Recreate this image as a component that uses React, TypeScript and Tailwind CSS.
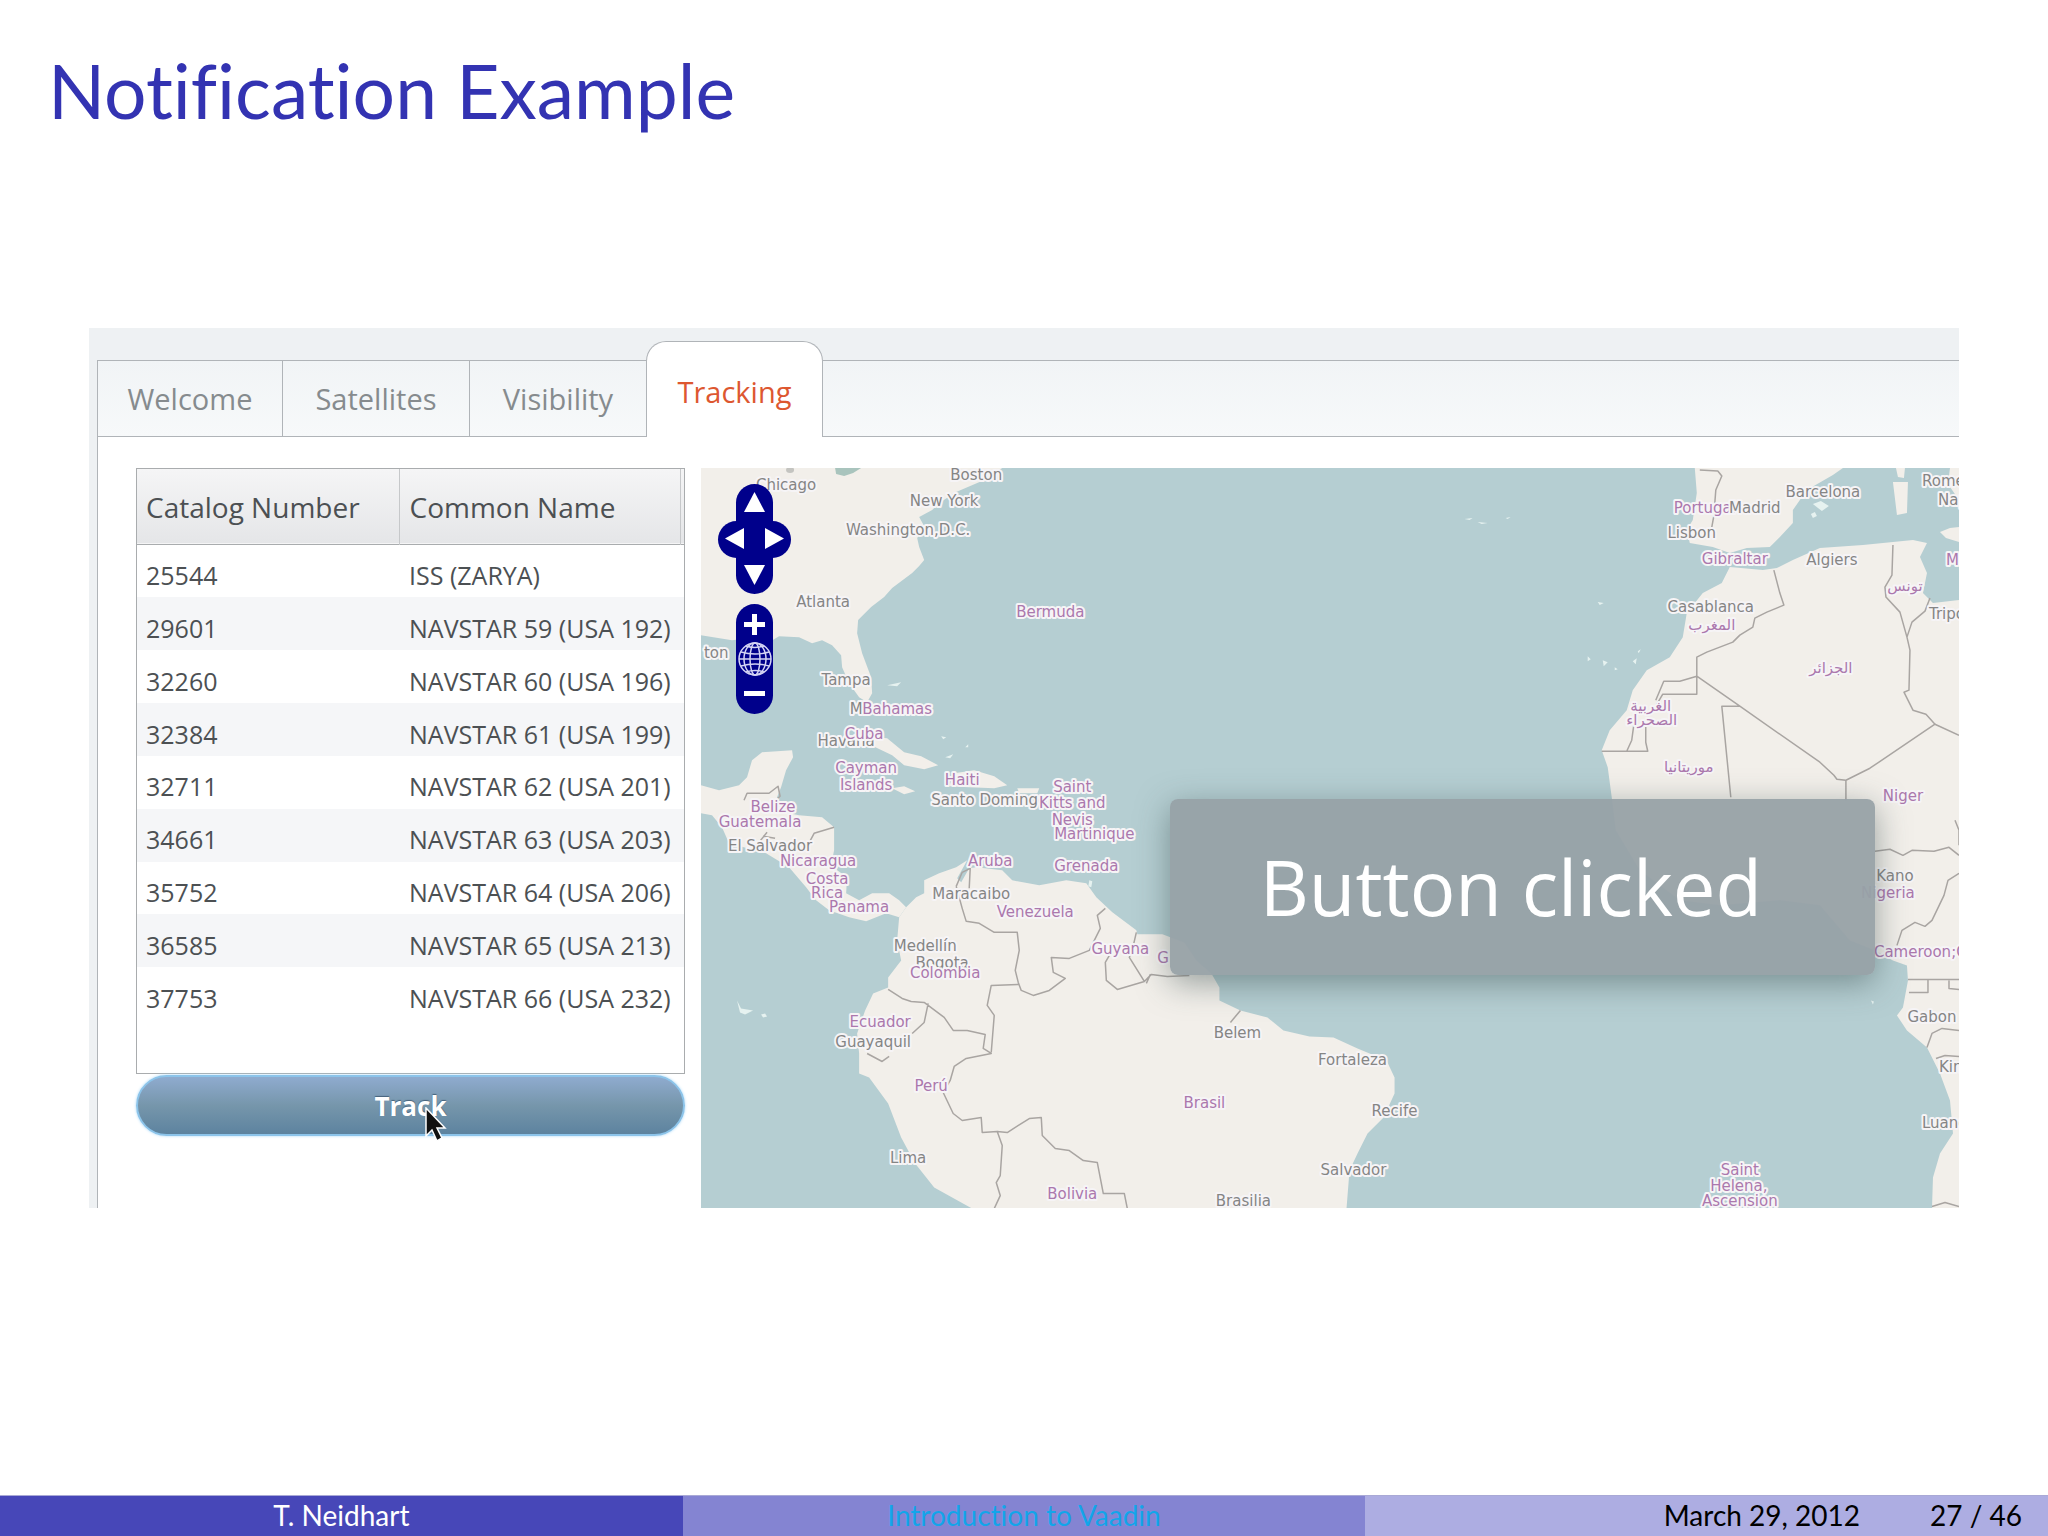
import React from "react";

type Label = { t: string; x: number; y: number; country?: boolean; anchor?: "start" | "middle" };

const satellites: [string, string][] = [
  ["25544", "ISS (ZARYA)"],
  ["29601", "NAVSTAR 59 (USA 192)"],
  ["32260", "NAVSTAR 60 (USA 196)"],
  ["32384", "NAVSTAR 61 (USA 199)"],
  ["32711", "NAVSTAR 62 (USA 201)"],
  ["34661", "NAVSTAR 63 (USA 203)"],
  ["35752", "NAVSTAR 64 (USA 206)"],
  ["36585", "NAVSTAR 65 (USA 213)"],
  ["37753", "NAVSTAR 66 (USA 232)"],
];

const land = [
  // North America
  "M702 468H1003L985 480L957 492L940 503L933 510L920 517L926 528L918 538L920 547L925 560L920 566L913 573L893 588L885 597L872 607L859 620L858 633L863 653L872 677L873 693L868 702L860 697L850 683L843 667L842 655L833 645L823 640L813 643L800 637L780 636L770 642L750 638L733 640L702 635Z",
  // Central America
  "M702 785L720 790L740 785L748 777L753 760L763 752L793 750L794 757L787 770L782 787L778 797L785 812L800 815L823 817L835 827L835 850L833 860L838 870L848 877L847 893L860 900L873 893L890 893L900 900L907 907L900 917L887 913L867 921L850 917L830 910L817 900L807 887L790 867L767 853L730 843L723 827L713 815L702 813Z",
  // South America
  "M907 907L917 897L925 893L925 880L940 873L957 867L968 860L958 878L962 882L970 868L977 867L1003 870L1013 880L1040 885L1067 880L1087 883L1097 897L1113 912L1137 930L1138 934H1163L1185 942L1197 960L1212 973L1220 987L1220 1000L1241 1010L1268 1017L1284 1030L1310 1036L1334 1037L1358 1048L1387 1060L1395 1077L1395 1093L1384 1117L1368 1133L1358 1153L1350 1170L1347 1208H973L935 1187L916 1163L902 1137L889 1103L870 1077L860 1073L860 1053L858 1033L866 1010L874 993L889 987L889 977L902 960L898 940L900 917Z",
  // Iberia and France
  "M1695 468L1697 493L1693 520L1687 530L1690 543L1713 547L1730 553L1747 548L1770 547L1780 537L1793 523L1793 510L1807 490L1833 475L1843 468Z",
  // Africa
  "M1730 567L1763 570L1777 568L1793 560L1820 548L1863 545L1893 542L1913 540L1927 543L1920 557L1927 573L1923 593L1933 603L1959 600V1208H1932L1933 1177L1940 1153L1953 1133L1950 1100L1940 1073L1927 1047L1907 1030L1897 1015L1903 1007L1908 980L1907 965L1893 960L1875 950L1850 940L1820 905L1780 900L1720 905L1680 900L1640 870L1616 830L1612 797L1608 767L1602 750L1610 730L1627 710L1633 690L1647 670L1670 657L1683 637L1687 613L1703 593L1722 583Z",
  // Cuba, Jamaica, Hispaniola, Puerto Rico
  "M842 742L866 736L888 738L905 752L922 756L939 765L925 769L905 765L893 755L870 744Z",
  "M893 788L905 786L916 791L905 794Z",
  "M950 786L955 773L975 770L995 776L1008 785L995 788L970 787Z",
  "M1018 788H1040L1038 793H1020Z",
  // Mediterranean islands and Italy
  "M1896 468H1905L1904 478L1898 477ZM1893 482H1908L1907 513L1897 515Z",
  "M1950 468H1959V500L1948 484ZM1940 532L1950 528L1959 527V542L1946 538Z",
];

const specks = [
  "M1813 504l8-3 8 5-7 5zM1811 514l4-2 2 4-4 2z",
  "M738 1000l4 8 12 2-8 4-5-2zM762 1014l4-1 2 3-4 1z",
  "M888 685l14-3-4 4zM942 736l5 1-3 2zM946 757l8-3-3 4zM966 747l3-3 0 3z",
  "M1465 519l8-1-3 2zM1478 522l10 1-6 1zM1506 518l5-1-3 2z",
  "M1598 602l6 1-4 2zM1588 656l3 3-3 2zM1603 660l5 2-4 4zM1615 667l3 2-3 1zM1633 661l4-3-1 6zM1638 651l3-2-2 4z",
  "M1871 1000l3 1-1 3zM1090 880l3 1-1 6-3-1z",
];

const borders = [
  // north-western Africa
  "M1774 570L1780 593L1784 605L1767 612L1755 618L1753 627L1740 635L1733 642L1707 652L1697 657V694H1663L1656 706M1697 676L1680 681L1664 681L1656 700M1635 718L1632 740L1627 751M1602 751H1648L1646 742L1646 726M1697 676L1740 706L1722 706L1731 797M1740 706L1820 762L1834 775L1837 779L1846 780L1870 768L1935 724L1959 735M1846 780V800",
  "M1893 545L1892 575L1885 587L1886 597L1900 612L1907 637L1910 650L1909 690L1904 692L1913 710L1926 714L1935 724M1907 637L1912 622L1925 611L1930 598",
  // Nigeria, Cameroon, Gabon, Congo
  "M1875 851L1890 849L1903 855L1912 850L1934 851L1949 847L1959 855M1959 873L1948 880L1944 895L1932 920L1925 926L1915 922L1902 930L1897 945M1908 979H1959M1928 979V992H1909M1949 980V988L1959 989M1927 1047L1932 1033L1942 1028L1959 1030M1936 1058L1945 1055L1959 1056M1932 1206L1945 1202L1959 1206M1955 820L1959 830V845",
  // Portugal
  "M1700 470L1718 471L1722 476L1716 490L1714 516L1712 527",
  // Mexico, Guatemala, Honduras, Nicaragua
  "M745 800L748 793H770L779 786L781 796L770 806M760 842L768 832M764 836L776 838M806 850L815 833L835 827",
  // Colombia, Venezuela, Guyana
  "M957 886L963 872L971 868L970 888M957 886L963 908L967 921L980 923L995 932H1018L1020 950L1016 970L1019 982L1022 990L1034 995L1050 990L1066 978L1054 972L1052 957L1070 958L1090 950L1101 928L1098 915L1106 908M1020 984L992 985L990 995L988 1005L995 1015L992 1052M1137 932L1134 945L1130 957L1145 981L1118 989L1107 980L1106 962L1113 950M1145 981L1152 974L1168 976L1190 975M1147 983L1151 974",
  // Ecuador, Peru, Bolivia
  "M889 989L903 998L912 1001L925 1002L945 1017L954 1030L968 1030L986 1034L984 1048L992 1053L967 1058L955 1066L951 1080L944 1092L954 1113L963 1120L982 1117L983 1132L998 1131L1003 1145L1001 1175L997 1182L1001 1195L995 1208M998 1131L1008 1132L1030 1118L1042 1117L1043 1135L1056 1148L1070 1150L1084 1160L1098 1162L1104 1193H1125L1128 1208M929 1003L925 1022L913 1033M868 1053L883 1061L890 1056",
  "M1231 1022L1241 1010",
];

const labels: Label[] = [
  { t: "Chicago", x: 787, y: 485 },
  { t: "Boston", x: 977, y: 475 },
  { t: "New York", x: 945, y: 501 },
  { t: "Washington,D.C.", x: 909, y: 530 },
  { t: "Atlanta", x: 824, y: 602 },
  { t: "ton", x: 705, y: 653, anchor: "start" },
  { t: "Bermuda", x: 1051, y: 612, country: true },
  { t: "Tampa", x: 847, y: 680 },
  { t: "M", x: 857, y: 709 },
  { t: "Bahamas", x: 898, y: 709, country: true },
  { t: "Havana", x: 847, y: 741 },
  { t: "Cuba", x: 865, y: 734, country: true },
  { t: "Cayman", x: 867, y: 768, country: true },
  { t: "Islands", x: 867, y: 785, country: true },
  { t: "Haiti", x: 963, y: 780, country: true },
  { t: "Santo Domingo", x: 990, y: 800 },
  { t: "Saint", x: 1073, y: 787, country: true },
  { t: "Kitts and", x: 1073, y: 803, country: true },
  { t: "Nevis", x: 1073, y: 820, country: true },
  { t: "Martinique", x: 1095, y: 834, country: true },
  { t: "Grenada", x: 1087, y: 866, country: true },
  { t: "Aruba", x: 991, y: 861, country: true },
  { t: "Maracaibo", x: 972, y: 894 },
  { t: "Venezuela", x: 1036, y: 912, country: true },
  { t: "Belize", x: 774, y: 807, country: true },
  { t: "Guatemala", x: 761, y: 822, country: true },
  { t: "El Salvador", x: 771, y: 846 },
  { t: "Nicaragua", x: 819, y: 861, country: true },
  { t: "Costa", x: 828, y: 879, country: true },
  { t: "Rica", x: 828, y: 893, country: true },
  { t: "Panama", x: 860, y: 907, country: true },
  { t: "Medellín", x: 926, y: 946 },
  { t: "Bogota", x: 943, y: 963 },
  { t: "Colombia", x: 946, y: 973, country: true },
  { t: "Guyana", x: 1121, y: 949, country: true },
  { t: "G", x: 1158, y: 958, country: true, anchor: "start" },
  { t: "Ecuador", x: 881, y: 1022, country: true },
  { t: "Guayaquil", x: 874, y: 1042 },
  { t: "Perú", x: 932, y: 1086, country: true },
  { t: "Brasil", x: 1205, y: 1102, country: true },
  { t: "Belem", x: 1238, y: 1033 },
  { t: "Lima", x: 909, y: 1157 },
  { t: "Bolivia", x: 1073, y: 1193, country: true },
  { t: "Brasilia", x: 1244, y: 1200 },
  { t: "Fortaleza", x: 1353, y: 1060 },
  { t: "Recife", x: 1395, y: 1110 },
  { t: "Salvador", x: 1354, y: 1169 },
  { t: "Saint", x: 1740, y: 1169, country: true },
  { t: "Helena,", x: 1739, y: 1185, country: true },
  { t: "Ascension", x: 1740, y: 1200, country: true },
  { t: "Portugal", x: 1705, y: 508, country: true },
  { t: "Madrid", x: 1755, y: 508 },
  { t: "Barcelona", x: 1823, y: 492 },
  { t: "Lisbon", x: 1692, y: 533 },
  { t: "Gibraltar", x: 1735, y: 559, country: true },
  { t: "Algiers", x: 1832, y: 560 },
  { t: "Casablanca", x: 1711, y: 607 },
  { t: "المغرب", x: 1712, y: 625, country: true },
  { t: "الجزائر", x: 1831, y: 668, country: true },
  { t: "تونس", x: 1905, y: 586, country: true },
  { t: "الغربية", x: 1651, y: 706, country: true },
  { t: "الصحراء", x: 1652, y: 720, country: true },
  { t: "موريتانيا", x: 1689, y: 767, country: true },
  { t: "Tripoli", x: 1929, y: 614, anchor: "start" },
  { t: "Rome", x: 1922, y: 481, anchor: "start" },
  { t: "Naples", x: 1938, y: 500, anchor: "start" },
  { t: "Malta", x: 1946, y: 560, country: true, anchor: "start" },
  { t: "Niger", x: 1903, y: 796, country: true },
  { t: "Kano", x: 1895, y: 876 },
  { t: "Nigeria", x: 1888, y: 893, country: true },
  { t: "Cameroon;C", x: 1874, y: 952, country: true, anchor: "start" },
  { t: "Gabon", x: 1932, y: 1017 },
  { t: "Kinshasa", x: 1939, y: 1067, anchor: "start" },
  { t: "Luanda", x: 1922, y: 1122, anchor: "start" },
];

function WorldMap() {
  return (
    <svg
      className="block h-full w-full bg-[#b5ced2]"
      viewBox="702 468 1257 740"
      preserveAspectRatio="xMinYMin slice"
      role="img"
      aria-label="Atlantic map"
    >
      <g fill="#f2efea">
        {land.map((d) => (
          <path key={d} d={d} />
        ))}
      </g>
      <g fill="#e6f2f0">
        {specks.map((d) => (
          <path key={d} d={d} />
        ))}
      </g>
      <path d="M836 468h26l-8 5-9 3-8-2z" fill="#a9c4bd" />
      <ellipse cx="791" cy="470" rx="4" ry="3" fill="#c4c4c0" />
      <g fill="none" stroke="#a9a5a2" strokeWidth="1.5" strokeLinejoin="round">
        {borders.map((d) => (
          <path key={d} d={d} />
        ))}
      </g>
      <g
        className="font-['DejaVu_Sans',sans-serif] text-[15px]"
        stroke="#f6f4f6"
        strokeWidth="4"
        strokeLinejoin="round"
        paintOrder="stroke"
      >
        {labels.map((l) => (
          <text
            key={l.t + l.x + l.y}
            x={l.x}
            y={l.y + 5}
            textAnchor={l.anchor ?? "middle"}
            fill={l.country ? "#ab78ad" : "#858585"}
          >
            {l.t}
          </text>
        ))}
      </g>
    </svg>
  );
}

function Arrow({ d, label, className }: { d: string; label: string; className: string }) {
  return (
    <button type="button" aria-label={label} className={className}>
      <svg width="21" height="21" viewBox="0 0 21 21" fill="#fff" aria-hidden="true">
        <path d={d} />
      </svg>
    </button>
  );
}

function MapControls() {
  return (
    <div className="absolute left-[17px] top-4 flex flex-col items-center gap-[10px]">
      <div className="relative grid h-[110px] w-[73px] grid-cols-[28px_17px_28px] grid-rows-3">
        <span className="absolute inset-y-0 left-[18px] w-[37px] rounded-full bg-[#00008b]" />
        <span className="absolute inset-x-0 top-[37px] h-[37px] rounded-full bg-[#00008b]" />
        <Arrow label="Pan up" d="M10.5 0L21 20H0Z" className="relative col-span-3 flex items-center justify-center" />
        <Arrow label="Pan left" d="M0 10.5L19 0V21Z" className="relative flex items-center justify-end" />
        <span />
        <Arrow label="Pan right" d="M21 10.5L2 0V21Z" className="relative flex items-center justify-start" />
        <Arrow label="Pan down" d="M10.5 20L21 0H0Z" className="relative col-span-3 flex items-center justify-center" />
      </div>
      <div className="flex h-[110px] w-[37px] flex-col items-center justify-between rounded-full bg-[#00008b] py-[10px]">
        <button type="button" aria-label="Zoom in">
          <svg width="21" height="21" viewBox="0 0 21 21" fill="#fff" aria-hidden="true">
            <path d="M8 0h5v8h8v5h-8v8H8v-8H0V8h8z" />
          </svg>
        </button>
        <button type="button" aria-label="Zoom to world">
          <svg width="34" height="34" viewBox="0 0 34 34" fill="none" stroke="#d4d4f4" strokeWidth="1.5" aria-hidden="true">
            <circle cx="17" cy="17" r="16" />
            <ellipse cx="17" cy="17" rx="5" ry="16" />
            <ellipse cx="17" cy="17" rx="11" ry="16" />
            <path d="M1 17h32M3 10q14 4 28 0M3 24q14-4 28 0M8 4q9 3 18 0M8 30q9-3 18 0" />
          </svg>
        </button>
        <button type="button" aria-label="Zoom out">
          <svg width="21" height="21" viewBox="0 0 21 21" fill="#fff" aria-hidden="true">
            <path d="M0 8h21v5H0z" />
          </svg>
        </button>
      </div>
    </div>
  );
}

function TabStrip() {
  const idle = "h-full border-r border-[#b0b4b8] text-[#868b8e]";
  return (
    <div
      role="tablist"
      className="mt-8 flex h-[77px] border-y border-[#b0b4b8] bg-linear-to-b from-[#f1f4f6] to-[#f7f9fa] text-[29px]"
    >
      <button type="button" role="tab" aria-selected="false" className={idle + " w-[185px]"}>Welcome</button>
      <button type="button" role="tab" aria-selected="false" className={idle + " w-[187px]"}>Satellites</button>
      <button type="button" role="tab" aria-selected="false" className="h-full w-[176px] text-[#868b8e]">Visibility</button>
      <button
        type="button"
        role="tab"
        aria-selected="true"
        className="relative -mt-5 h-24 w-[177px] rounded-t-[20px] border border-b-0 border-[#b0b4b8] bg-white pt-1 text-[#dd5730]"
      >
        Tracking
      </button>
    </div>
  );
}

function SatelliteTable() {
  return (
    <div className="h-[606px] border border-[#a9acae] bg-white">
      <table className="h-[551px] w-full table-fixed border-collapse text-left text-[#4c5053]">
        <colgroup>
          <col className="w-[262px]" />
          <col />
          <col className="w-1" />
        </colgroup>
        <thead>
          <tr className="h-[75px] border-b border-[#a9acae] bg-linear-to-b from-[#f5f5f6] to-[#e5e6e8] text-[28px]">
            <th scope="col" className="border-r border-[#c6c8ca] pl-[9px] pt-[2px] font-normal">Catalog Number</th>
            <th scope="col" className="border-r border-[#c6c8ca] pl-[10px] pt-[2px] font-normal">Common Name</th>
            <td />
          </tr>
        </thead>
        <tbody className="text-[25px] leading-8">
          {satellites.map(([id, name]) => (
            <tr key={id} className="even:bg-[#f5f6f8]">
              <td className="pl-[9px] pt-2">{id}</td>
              <td className="whitespace-nowrap pl-[10px] pt-2" colSpan={2}>{name}</td>
            </tr>
          ))}
        </tbody>
      </table>
    </div>
  );
}

export default function App() {
  return (
    <div className="flex min-h-screen flex-col bg-white">
      <h1 className="px-[48px] pt-[46px] font-['Lato',sans-serif] text-[75px] leading-[88px] text-[#3333b2] [font-variant-ligatures:none]">
        Notification Example
      </h1>

      <main className="mx-[89px] mt-[194px] bg-[#eef1f3] pl-[8px] font-['Open_Sans',sans-serif]">
        <div className="flow-root">
          <div className="border-l border-[#b0b4b8]">
            <TabStrip />
            <div className="flex h-[771px] bg-white pl-[38px] pt-[31px]">
              <section className="w-[549px] shrink-0">
                <SatelliteTable />
                <div className="relative pt-[1px]">
                  <button
                    type="button"
                    className="h-[61px] w-full rounded-full border-2 border-[#8cc4ea] bg-linear-to-b from-[#8fabcf] via-[#7696ab] to-[#5d839f] text-[26px] font-bold leading-none text-white shadow-[0_0_3px_#a8d8f8] [text-shadow:0_-1px_1px_#46627a]"
                  >
                    Track
                  </button>
                  <svg
                    className="pointer-events-none absolute left-[289px] top-[33px]"
                    width="22"
                    height="36"
                    viewBox="0 0 22 36"
                    aria-hidden="true"
                  >
                    <path d="M1 1V29L7 23L12 34L17 31L12 21H20Z" fill="#111" stroke="#fff" strokeWidth="1.5" />
                  </svg>
                </div>
              </section>
              <section className="relative ml-4 min-w-0 flex-1 overflow-hidden">
                <WorldMap />
                <MapControls />
                <div
                  role="status"
                  className="absolute right-[84px] top-[331px] rounded-lg bg-[#97a1a6]/95 pb-9 pl-[90px] pr-[113px] pt-9 text-[76px] leading-[104px] text-white shadow-[0_8px_32px_rgba(60,80,80,0.5)]"
                >
                  Button clicked
                </div>
              </section>
            </div>
          </div>
        </div>
      </main>

      <footer className="mt-auto grid h-[41px] grid-cols-3 border-t border-[#a9a9d6] font-['Lato',sans-serif] text-[28px] leading-[38px] [font-variant-ligatures:none]">
        <span className="bg-[#4747b8] text-center text-white">T. Neidhart</span>
        <span className="bg-[#8484d2] text-center text-[#12a5ea]">Introduction to Vaadin</span>
        <span className="flex justify-end gap-[70px] bg-[#adade2] pr-[26px] text-black">
          <span>March 29, 2012</span>
          <span>27 / 46</span>
        </span>
      </footer>
    </div>
  );
}
